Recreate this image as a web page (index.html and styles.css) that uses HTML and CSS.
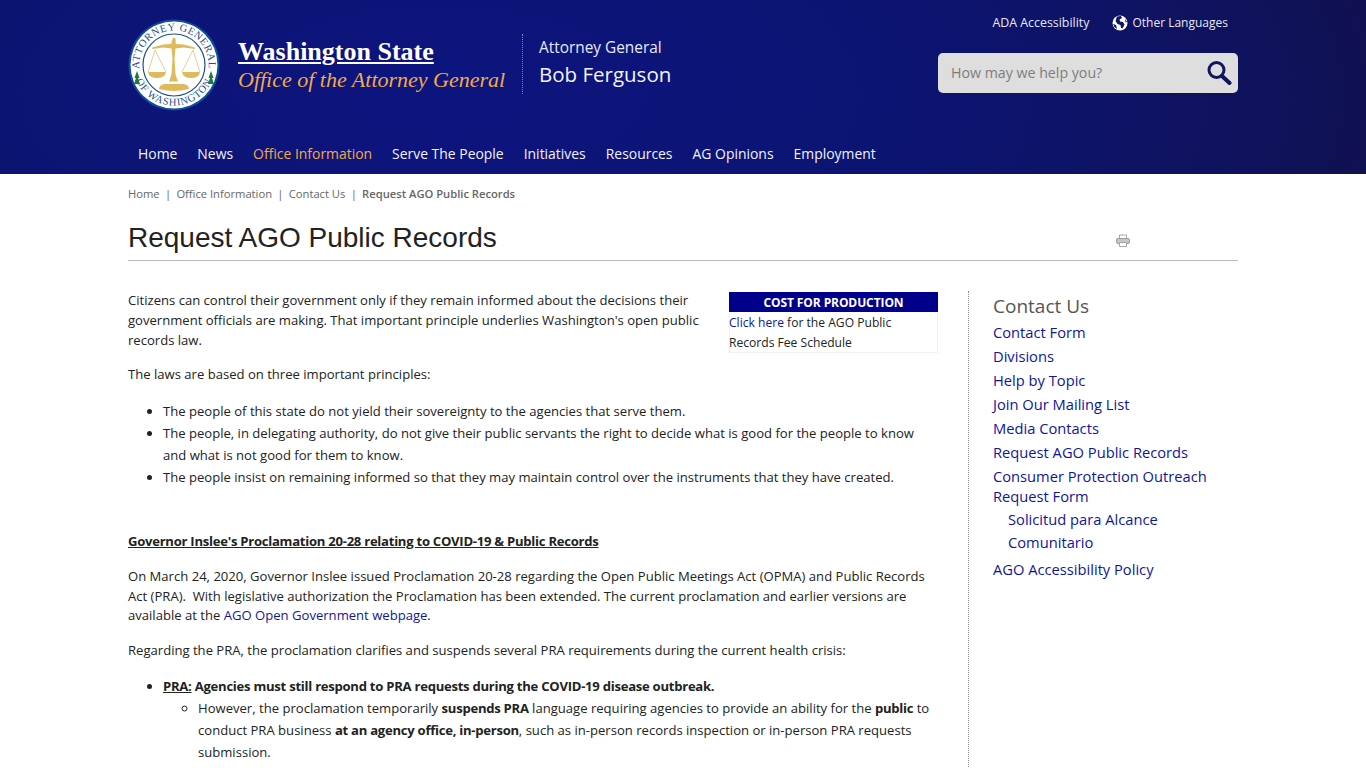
FILE: index.html
```html
<!DOCTYPE html>
<html lang="en">
<head>
<meta charset="utf-8">
<title>Request AGO Public Records</title>
<link rel="stylesheet" href="styles.css">
</head>
<body>
<header class="site-header">
  <div class="wrap header-inner">
    <div class="brand-row">
      <a class="seal" href="#">
        <svg width="92" height="92" viewBox="0 0 92 92">
          <circle cx="46" cy="46" r="45.500" fill="#0d4f9c"/>
          <circle cx="46" cy="46" r="43.500" fill="#fff"/>
          <circle cx="46" cy="46" r="31" fill="#fff" stroke="#1c4f92" stroke-width="1.200"/>
          <defs>
            <path id="arcTop" d="M17 65 A34.670 34.670 0 1 1 75 65"/>
            <path id="arcBot" d="M5.500 52 A41 41 0 0 0 86.500 52"/>
          </defs>
          <text class="seal-text"><textPath href="#arcTop" startOffset="50%" text-anchor="middle">ATTORNEY GENERAL</textPath></text>
          <text class="seal-text seal-low"><textPath href="#arcBot" startOffset="50%" text-anchor="middle">OF WASHINGTON</textPath></text>
          <path d="M6.500 59l2.500-7 2.500 7h-1.500l2 6h-6l2-6z" fill="#1e7a3a"/>
          <path d="M80.500 59l2.500-7 2.500 7h-1.500l2 6h-6l2-6z" fill="#1e7a3a"/>
          <g stroke="#cfae5c" stroke-width=".6" fill="none">
            <path d="M27 31l-7 22M27 31l11 22M65 31l-11 22M65 31l7 22"/>
          </g>
          <g fill="#dfba5c">
            <path d="M44.500 19.500q1.500-2 3 0l.3 5.500 8 .5 11 3v1.500l-11-1.500-8.300 1-1 10 1 16 2.500 7h-9l2.500-7 1-16-1-10-8.300-1-11 1.500V28.500l11-3 8-.5z"/>
            <path d="M36 65h20q5 1 5 5-15 4-30 0 0-4 5-5z"/>
            <path d="M20 53h18q-1 6-9 6t-9-6z"/>
            <path d="M54 53h18q-1 6-9 6t-9-6z"/>
          </g>
        </svg>
      </a>
      <div class="agency">
        <a class="agency-state" href="#">Washington State</a>
        <div class="agency-office">Office of the Attorney General</div>
      </div>
      <div class="ag-name">
        <div class="ag-title">Attorney General</div>
        <div class="ag-person">Bob Ferguson</div>
      </div>
      <div class="tools">
        <div class="tool-links">
          <a href="#">ADA Accessibility</a>
          <a class="lang" href="#">
            <svg width="16" height="16" viewBox="0 0 16 16"><circle cx="8" cy="8" r="7.500" fill="#fff"/><path d="M5 1.500l4-.5 1 2-2.500 1.500.5 2 3 .5 1.500 2.500-2 4-1.500-.5-.5-3-3-1-2-3zM13 4l2 3-1.500.5zM1 9l3 1 1 4-2.500-2z" fill="#10155f"/></svg>
            Other Languages
          </a>
        </div>
        <div class="search">
          <span class="search-hint">How may we help you?</span>
          <svg width="26" height="26" viewBox="0 0 26 26"><circle cx="10.500" cy="10" r="7.500" fill="none" stroke="#10155f" stroke-width="3"/><path d="M16 16l7.500 7" stroke="#10155f" stroke-width="4" stroke-linecap="round"/></svg>
        </div>
      </div>
    </div>
    <nav class="main-nav">
      <a href="#">Home</a>
      <a href="#">News</a>
      <a class="current" href="#">Office Information</a>
      <a href="#">Serve The People</a>
      <a href="#">Initiatives</a>
      <a href="#">Resources</a>
      <a href="#">AG Opinions</a>
      <a href="#">Employment</a>
    </nav>
  </div>
</header>
<div class="wrap">
  <div class="crumbs"><a href="#">Home</a><span>|</span><a href="#">Office Information</a><span>|</span><a href="#">Contact Us</a><span>|</span><b>Request AGO Public Records</b></div>
  <div class="title-row">
    <h1>Request AGO Public Records</h1>
    <svg class="printer" width="14" height="13" viewBox="0 0 14 13"><path d="M3.500 5V1h7v4" fill="#fff" stroke="#a3a8a3"/><rect x=".5" y="4.500" width="13" height="5" rx="1.500" fill="#c4c8c3" stroke="#9a9f9a"/><path d="M3.500 8.500h7v4h-7z" fill="#fff" stroke="#a3a8a3"/></svg>
  </div>
  <div class="columns">
    <main class="content">
      <aside class="cost">
        <div class="cost-head">COST FOR PRODUCTION</div>
        <div class="cost-body"><a href="#">Click here</a> for the AGO Public Records Fee Schedule</div>
      </aside>
      <p class="intro">Citizens can control their government only if they remain informed about the decisions their government officials are making. That important principle underlies Washington's open public records law.</p>
      <p>The laws are based on three important principles:</p>
      <ul class="principles">
        <li>The people of this state do not yield their sovereignty to the agencies that serve them.</li>
        <li>The people, in delegating authority, do not give their public servants the right to decide what is good for the people to know and what is not good for them to know.</li>
        <li>The people insist on remaining informed so that they may maintain control over the instruments that they have created.</li>
      </ul>
      <p class="subhead"><b><u>Governor Inslee's Proclamation 20-28 relating to COVID-19 &amp; Public Records</u></b></p>
      <p class="tight">On March 24, 2020, Governor Inslee issued Proclamation 20-28 regarding the Open Public Meetings Act (OPMA) and Public Records Act (PRA).&nbsp; With legislative authorization the Proclamation has been extended. The current proclamation and earlier versions are available at the <a href="#">AGO Open Government webpage</a>.</p>
      <p>Regarding the PRA, the proclamation clarifies and suspends several PRA requirements during the current health crisis:</p>
      <ul>
        <li><b><u>PRA:</u> Agencies must still respond to PRA requests during the COVID-19 disease outbreak.</b>
          <ul>
            <li>However, the proclamation temporarily <b>suspends PRA</b> language requiring agencies to provide an ability for the <b>public</b> to conduct PRA business <b>at an agency office, in-person</b>, such as in-person records inspection or in-person PRA requests submission.</li>
          </ul>
        </li>
      </ul>
    </main>
    <aside class="side">
      <h2>Contact Us</h2>
      <a href="#">Contact Form</a>
      <a href="#">Divisions</a>
      <a href="#">Help by Topic</a>
      <a href="#">Join Our Mailing List</a>
      <a href="#">Media Contacts</a>
      <a href="#">Request AGO Public Records</a>
      <a href="#">Consumer Protection Outreach Request Form</a>
      <a class="sub" href="#">Solicitud para Alcance Comunitario</a>
      <a class="last" href="#">AGO Accessibility Policy</a>
    </aside>
  </div>
</div>
</body>
</html>
```
FILE: styles.css
```css
* { box-sizing: border-box; }
html, body { margin: 0; height: 768px; overflow: hidden; }
body { background: #fff; color: #222; font: 13.080px/20px "Open Sans", sans-serif; }
a { color: #10169a; text-decoration: none; }
b { letter-spacing: -.26px; }
.wrap { width: 1110px; margin-left: 128px; }

.site-header { height: 174px; background: radial-gradient(ellipse 1050px 460px at 440px 95px, #0c157f 0%, #0c1472 45%, #0f125c 78%, #110f48 100%); }
.header-inner { display: flex; flex-direction: column; }
.brand-row { display: flex; height: 134px; }
.seal { display: block; margin-top: 19px; width: 92px; height: 92px; }
.seal-text { font: 10.500px "Liberation Serif", serif; fill: #1c4f92; letter-spacing: .6px; }
.seal-text.seal-low { letter-spacing: .8px; }
.agency { margin: 37px 0 0 18px; width: 284px; font-family: "Liberation Serif", serif; }
.agency-state { display: inline-block; color: #fff; font-size: 26px; line-height: 30px; font-weight: bold; text-decoration: underline; text-decoration-thickness: 2px; text-underline-offset: 2px; }
.agency-office { color: #f2a94a; font-size: 22px; line-height: 27px; font-style: italic; white-space: nowrap; margin-top: -1px; }
.ag-name { margin: 34px 0 0; height: 60px; padding: 3px 0 0 16px; border-left: 1px dotted #6f7fc0; width: 416px; color: #fff; }
.ag-title { font-size: 15.400px; line-height: 22px; color: #e8e9f6; }
.ag-person { font-size: 20.500px; line-height: 30px; color: #f2f3fc; }
.tools { width: 300px; display: flex; flex-direction: column; }
.tool-links { display: flex; justify-content: flex-end; gap: 23px; margin: 13px 10px 0 0; height: 20px; }
.tool-links a { color: #e6e7f5; font-size: 12.400px; line-height: 20px; white-space: nowrap; }
.tool-links a.lang { display: flex; align-items: center; gap: 4px; font-size: 12px; }
.search { margin-top: 20px; height: 40px; border-radius: 5px; background: #dedede; display: flex; align-items: center; justify-content: space-between; padding: 0 6px 0 13px; }
.search-hint { color: #7d7d7d; font-size: 14.200px; }
.main-nav { display: flex; gap: 20px; padding-left: 10px; height: 40px; align-items: flex-start; }
.main-nav a { color: #f1f2fb; font-size: 13.930px; line-height: 40px; white-space: nowrap; }
.main-nav a.current { color: #f5a94a; }

.crumbs { margin-top: 10px; height: 20px; font-size: 11.200px; line-height: 20px; color: #666; display: flex; gap: 5.300px; }
.crumbs a { color: #666; }
.crumbs b { color: #666; font-weight: 600; letter-spacing: 0; }
.title-row { height: 57px; border-bottom: 1px solid #bbb; display: flex; justify-content: space-between; padding-top: 12px; }
h1 { margin: 0; font: normal 28px/44px "Liberation Sans", sans-serif; color: #222; }
.printer { margin: 18px 108px 0 0; }
.columns { display: flex; margin-top: 30px; }
.content { width: 810px; height: 480px; margin-top: -1px; }
.content p { margin: 0 0 15px; }
.content p.intro { margin-bottom: 14px; }
.content p.tight { line-height: 19.500px; padding-top: 1px; margin-bottom: 14.500px; }
.cost { float: right; width: 209px; margin: 2px 0 10px 28px; border: 1px solid #f2f2f2; border-top: 0; }
.cost-head { background: #00008b; color: #fff; text-align: center; font-size: 12px; line-height: 19px; padding-top: 1px; font-weight: bold; letter-spacing: -.1px; margin: 0 -1px; }
.cost-body { font-size: 12.100px; color: #222; padding-top: 1px; margin: 0 0 -1px -1px; }
.cost-body a { color: #10169a; }
ul { margin: 0 0 15px; padding: 0 0 0 35px; }
ul.principles { margin-top: 16px; }
li { line-height: 22px; }
li ul { margin: 0; list-style: circle; }
.content p.subhead { margin-top: 43px; }
.side { margin-left: 30px; width: 270px; padding: 0 0 0 24px; border-left: 1px dotted #888; height: 480px; }
.side h2 { margin: 0 0 1px; font-size: 19px; line-height: 30px; font-weight: normal; color: #555; }
.side a { display: block; font-size: 14.700px; line-height: 20px; margin-bottom: 4px; color: #10169a; }
.side a.sub { margin: -2px 0 5px 15px; line-height: 23px; width: 170px; }
```
